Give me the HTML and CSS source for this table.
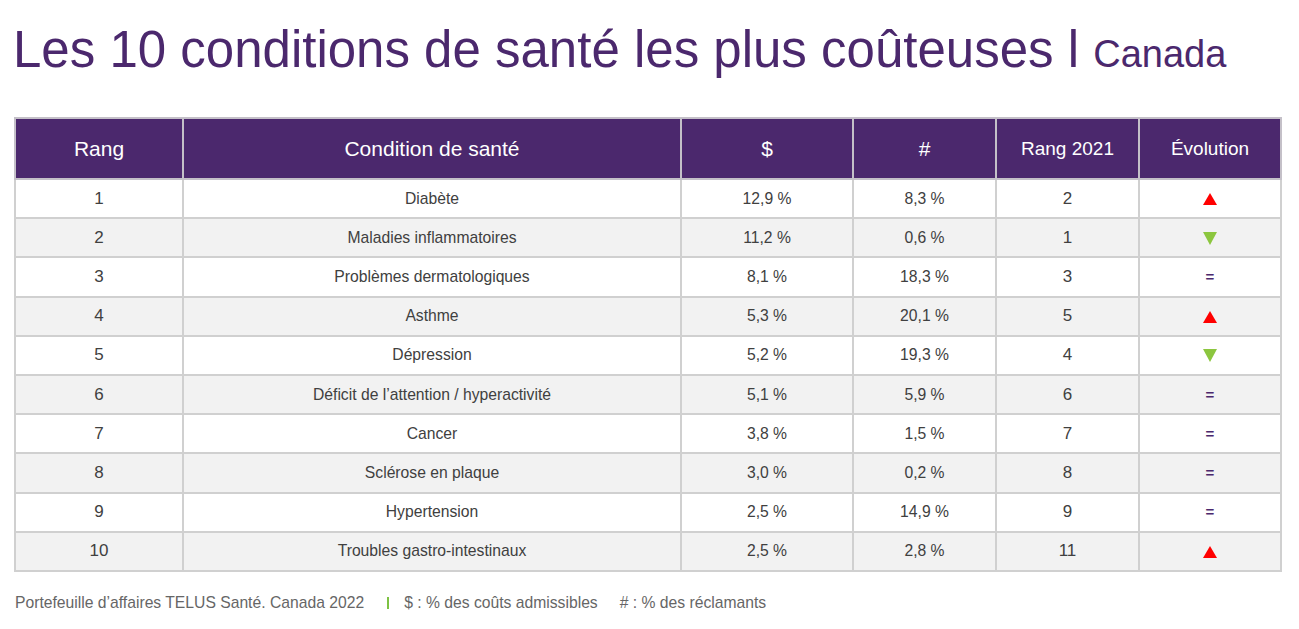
FILE: index.html
```html
<!DOCTYPE html>
<html lang="fr">
<head>
<meta charset="utf-8">
<title>Les 10 conditions de santé les plus coûteuses</title>
<link rel="stylesheet" href="styles.css">
</head>
<body>
<h1 class="title">Les 10 conditions de santé les plus coûteuses l <span class="title-sub">Canada</span></h1>
<table class="grid">
  <colgroup>
    <col class="c-rang"><col class="c-cond"><col class="c-cost"><col class="c-count"><col class="c-prev"><col class="c-evo">
  </colgroup>
  <thead>
    <tr>
      <th>Rang</th>
      <th>Condition de santé</th>
      <th>$</th>
      <th>#</th>
      <th class="th-small">Rang 2021</th>
      <th class="th-small">Évolution</th>
    </tr>
  </thead>
  <tbody>
    <tr><td>1</td><td class="cond">Diabète</td><td class="pct">12,9 %</td><td class="pct">8,3 %</td><td>2</td><td><span class="up"></span></td></tr>
    <tr><td>2</td><td class="cond">Maladies inflammatoires</td><td class="pct">11,2 %</td><td class="pct">0,6 %</td><td>1</td><td><span class="down"></span></td></tr>
    <tr><td>3</td><td class="cond">Problèmes dermatologiques</td><td class="pct">8,1 %</td><td class="pct">18,3 %</td><td>3</td><td><span class="same">=</span></td></tr>
    <tr><td>4</td><td class="cond">Asthme</td><td class="pct">5,3 %</td><td class="pct">20,1 %</td><td>5</td><td><span class="up"></span></td></tr>
    <tr><td>5</td><td class="cond">Dépression</td><td class="pct">5,2 %</td><td class="pct">19,3 %</td><td>4</td><td><span class="down"></span></td></tr>
    <tr><td>6</td><td class="cond">Déficit de l’attention / hyperactivité</td><td class="pct">5,1 %</td><td class="pct">5,9 %</td><td>6</td><td><span class="same">=</span></td></tr>
    <tr><td>7</td><td class="cond">Cancer</td><td class="pct">3,8 %</td><td class="pct">1,5 %</td><td>7</td><td><span class="same">=</span></td></tr>
    <tr><td>8</td><td class="cond">Sclérose en plaque</td><td class="pct">3,0 %</td><td class="pct">0,2 %</td><td>8</td><td><span class="same">=</span></td></tr>
    <tr><td>9</td><td class="cond">Hypertension</td><td class="pct">2,5 %</td><td class="pct">14,9 %</td><td>9</td><td><span class="same">=</span></td></tr>
    <tr><td>10</td><td class="cond">Troubles gastro-intestinaux</td><td class="pct">2,5 %</td><td class="pct">2,8 %</td><td>11</td><td><span class="up"></span></td></tr>
  </tbody>
</table>
<p class="note">
  <span class="note-item">Portefeuille d’affaires TELUS Santé. Canada 2022</span>
  <span class="note-sep"></span>
  <span class="note-item">$ : % des coûts admissibles</span>
  <span class="note-item"># : % des réclamants</span>
</p>
</body>
</html>
```

FILE: styles.css
```css
html, body {
  margin: 0;
  padding: 0;
  background: #ffffff;
}

body {
  font-family: "Liberation Sans", Arial, sans-serif;
  color: #404040;
}

.title {
  margin: 24px 0 0 13px;
  font-size: 51px;
  line-height: 51px;
  font-weight: normal;
  color: #4b286d;
  white-space: nowrap;
}

.title-sub {
  font-size: 38px;
}

.grid {
  margin: 37px 0 0 14px;
  width: 1268px;
  table-layout: fixed;
  border-collapse: collapse;
  border: 2px solid #d0d0d0;
}

.c-rang { width: 168px; }
.c-cond { width: 498px; }
.c-cost { width: 172px; }
.c-count { width: 143px; }
.c-prev { width: 143px; }
.c-evo { width: 142px; }

.grid th {
  height: 59px;
  padding: 0;
  background: #4b286d;
  color: #ffffff;
  font-weight: normal;
  font-size: 21px;
  text-align: center;
  vertical-align: middle;
  border: 2px solid #c4c0c8;
}

.grid th.th-small {
  font-size: 19px;
}

.grid td {
  height: 37.2px;
  padding: 0;
  text-align: center;
  vertical-align: middle;
  font-size: 17px;
  color: #404040;
  border: 2px solid #d0d0d0;
}

.grid td.cond,
.grid td.pct {
  font-size: 15.7px;
}

.grid tbody tr:nth-child(even) td {
  background: #f2f2f2;
}

.up {
  display: inline-block;
  width: 0;
  height: 0;
  border-left: 7px solid transparent;
  border-right: 7px solid transparent;
  border-bottom: 12px solid #ff0000;
  vertical-align: middle;
}

.down {
  display: inline-block;
  width: 0;
  height: 0;
  border-left: 7px solid transparent;
  border-right: 7px solid transparent;
  border-top: 13px solid #8cc63f;
  vertical-align: middle;
}

.same {
  color: #4b286d;
  font-weight: bold;
  font-size: 15px;
}

.note {
  margin: 22px 0 0 15px;
  font-size: 15.7px;
  line-height: 18px;
  color: #666666;
  display: flex;
  align-items: center;
}

.note-sep {
  display: inline-block;
  width: 2px;
  height: 12px;
  background: #7dc243;
  margin: 0 15px 0 23px;
}

.note-item + .note-item {
  margin-left: 22px;
}
```
